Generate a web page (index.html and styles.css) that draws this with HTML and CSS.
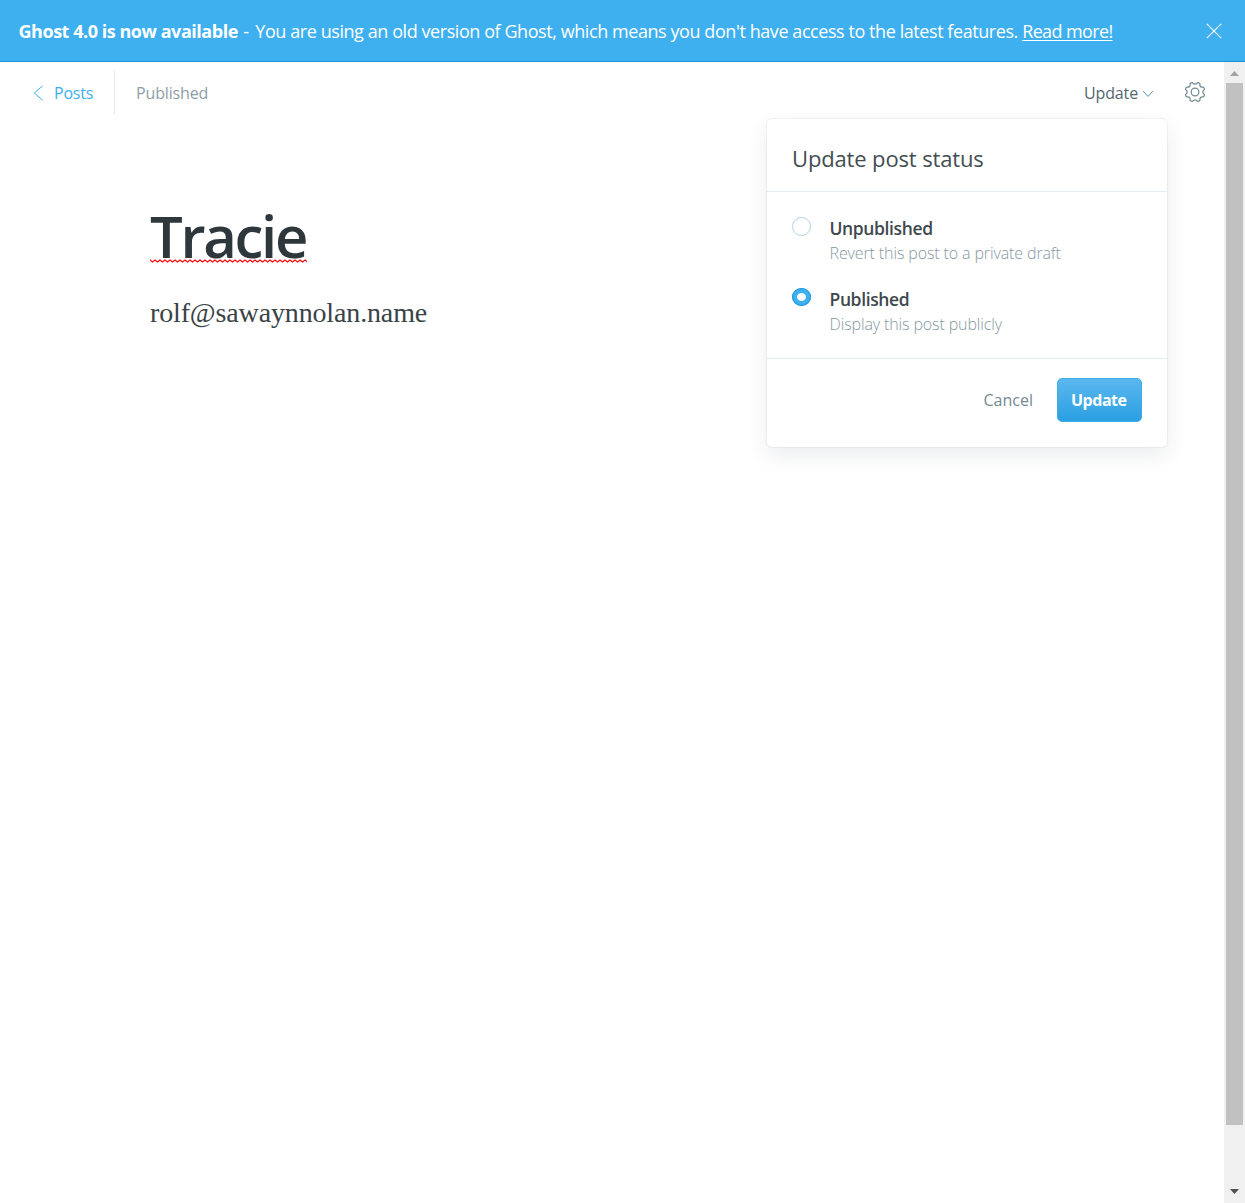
FILE: index.html
```html
<!DOCTYPE html>
<html lang="en">
<head>
<meta charset="utf-8">
<title>Tracie - Ghost editor</title>
<link rel="stylesheet" href="styles.css">
</head>
<body>
<div class="app">
  <aside class="banner">
    <p class="banner-text"><b class="banner-strong">Ghost 4.0 is now available</b><span class="banner-dash"> - </span><span class="banner-copy">You are using an old version of Ghost, which means you don't have access to the latest features. </span><a class="banner-link" href="#">Read more!</a></p>
    <svg class="close" width="16" height="16" viewBox="0 0 16 16"><path d="M.8.8l14.4 14.4M15.2.8L.8 15.2"/></svg>
  </aside>
  <div class="viewport">
    <main class="editor">
      <header class="toolbar">
        <a class="back" href="#"><svg class="chevron-left" width="11" height="16" viewBox="0 0 11 16"><path d="M9.7.9L1.2 8l8.5 7.1"/></svg><span class="back-label">Posts</span></a>
        <span class="status">Published</span>
        <button class="update-trigger"><span class="trigger-label">Update</span><svg class="chevron-down" width="12" height="8" viewBox="0 0 12 8"><path d="M1.2 1.2L6 6.4l4.8-5.2"/></svg></button>
        <svg class="gear" width="22" height="22" viewBox="-11.5 -11.5 23 23"><path d="M9.85-2.64Q6.4 0 9.85 2.64Q10 4.1 8.83 5.1Q4.5 4.5 5.1 8.83Q4.1 10 2.64 9.85Q0 6.4-2.64 9.85Q-4.1 10-5.1 8.83Q-4.5 4.5-8.83 5.1Q-10 4.1-9.85 2.64Q-6.4 0-9.85-2.64Q-10-4.1-8.83-5.1Q-4.5-4.5-5.1-8.83Q-4.1-10-2.64-9.85Q0-6.4 2.64-9.85Q4.1-10 5.1-8.83Q4.5-4.5 8.83-5.1Q10-4.1 9.85-2.64Z"/><circle r="4"/></svg>
      </header>
      <article class="post">
        <h1 class="post-title"><span class="misspelt">Tracie<svg class="squiggle" width="157" height="4"><defs><pattern id="wave" width="5" height="4" patternUnits="userSpaceOnUse"><path d="M-1 1.8L0 1L2.5 3L5 1L6 1.8"/></pattern></defs><rect width="157" height="4" fill="url(#wave)"/></svg></span></h1>
        <p class="post-body">rolf@sawaynnolan.name</p>
      </article>
      <section class="menu">
        <h2 class="menu-title">Update post status</h2>
        <div class="options">
          <div class="option">
            <span class="radio"></span>
            <div><div class="option-name">Unpublished</div><div class="option-note">Revert this post to a private draft</div></div>
          </div>
          <div class="option">
            <span class="radio radio-on"></span>
            <div><div class="option-name">Published</div><div class="option-note">Display this post publicly</div></div>
          </div>
        </div>
        <footer class="menu-footer"><button class="cancel">Cancel</button><button class="confirm">Update</button></footer>
      </section>
    </main>
    <div class="scrollbar">
      <svg class="arrow-up" width="9" height="5"><path d="M0 5L4.5 0L9 5Z"/></svg>
      <div class="thumb"></div>
      <svg class="arrow-down" width="9" height="5"><path d="M0 0L4.5 5L9 0Z"/></svg>
    </div>
  </div>
</div>
</body>
</html>
```
FILE: styles.css
```css
* { box-sizing: border-box; }
body { margin: 0; background: #fff; font-family: "Open Sans", "Noto Sans", sans-serif; }
h1, h2, p { margin: 0; }
button { border: 0; background: none; padding: 0; font: inherit; }
svg { display: block; fill: none; flex: none; }
a { text-decoration: none; }

.app { display: flex; flex-direction: column; height: 1203px; overflow: hidden; }

.banner { display: flex; align-items: center; justify-content: space-between; height: 62px; padding: 0 23.5px 0 18.5px; background: #3eb0ef; border-bottom: 1px solid #1a93d8; color: #fff; }
.banner-text { font-size: 18px; line-height: 24px; white-space: pre; }
.banner-strong { font-weight: 700; letter-spacing: -0.46px; }
.banner-dash { letter-spacing: 0.75px; }
.banner-copy { letter-spacing: -0.43px; }
.banner-link { color: #fff; letter-spacing: -0.62px; text-decoration: underline; text-decoration-thickness: 1px; text-underline-offset: 2px; }
.close { stroke: #fff; stroke-width: 1.1; }

.viewport { display: flex; flex: 1; }
.editor { position: relative; flex: 1; }

.toolbar { display: flex; align-items: center; height: 62px; padding: 0 18px 0 33px; font-size: 16px; line-height: 22px; }
.back { display: flex; align-items: center; gap: 10px; width: 82px; height: 45px; margin-top: -1px; border-right: 1px solid #e3edf3; color: #3eb0ef; }
.chevron-left { stroke: #3eb0ef; stroke-width: 1; }
.back-label { letter-spacing: -0.2px; }
.status { margin-left: 21px; letter-spacing: -0.15px; color: #8c9ea8; }
.update-trigger { display: flex; align-items: center; gap: 4px; margin-left: auto; color: #54666d; }
.trigger-label { letter-spacing: -0.15px; }
.chevron-down { margin-top: 2px; stroke: #5b8ca3; stroke-width: 1; }
.gear { margin-left: 30px; margin-top: -2px; stroke: #738a94; stroke-width: 1.3; }

.post { padding: 75px 150px 0; color: #2e373c; }
.post-title { font-size: 58px; font-weight: 600; line-height: 74px; }
.misspelt { position: relative; letter-spacing: -2.3px; }
.squiggle { position: absolute; left: 0; bottom: 12px; }
.squiggle path { stroke: #f00; stroke-width: 1.2; }
.post-body { margin-top: 22px; font-family: "Liberation Serif", serif; font-size: 28px; line-height: 36px; letter-spacing: -0.14px; color: #3a4347; }

.menu { position: absolute; left: 767px; top: 57px; width: 400px; height: 328px; background: #fff; border-radius: 5px; box-shadow: 0 0 0 1px rgba(99,114,130,.07), 0 8px 22px rgba(27,39,51,.09); }
.menu-title { height: 73px; padding: 24px 25px 0; border-bottom: 1px solid #e5edf3; font-size: 22px; font-weight: 400; line-height: 30px; letter-spacing: -0.14px; color: #434e53; }
.options { display: flex; flex-direction: column; gap: 23px; height: 167px; padding: 25px; border-bottom: 1px solid #e3edf3; }
.option { display: flex; gap: 18.5px; height: 48px; }
.radio { flex: none; width: 19px; height: 19px; border: 1px solid #b5d2e4; border-radius: 50%; }
.radio-on { height: 18px; background: #fff; border: 5px solid #3eb0ef; outline: 1px solid #1e98df; outline-offset: -1px; }
.option-name { margin-top: -1px; font-size: 17.5px; font-weight: 600; line-height: 24px; letter-spacing: -0.38px; color: #3e484d; }
.option-note { padding-top: 1px; font-size: 16px; font-weight: 300; line-height: 24px; letter-spacing: -0.12px; color: #8598a1; }
.menu-footer { display: flex; align-items: center; justify-content: flex-end; gap: 24px; padding: 19px 25px; font-size: 16px; }
.cancel { color: #738a94; }
.confirm { width: 85px; height: 44px; padding-right: 1.5px; border: 1px solid #3eade9; border-radius: 5px; background: linear-gradient(#5bb8ef, #2a9fe2); color: #fff; font-weight: 700; letter-spacing: -0.45px; }

.scrollbar { display: flex; flex-direction: column; align-items: center; width: 21px; background: #f0f0f0; }
.arrow-up { margin: 9px 0 7px; fill: #a3a3a3; }
.thumb { width: 17px; height: 1042px; background: #c1c1c1; }
.arrow-down { margin-top: 64px; fill: #505050; }
```
